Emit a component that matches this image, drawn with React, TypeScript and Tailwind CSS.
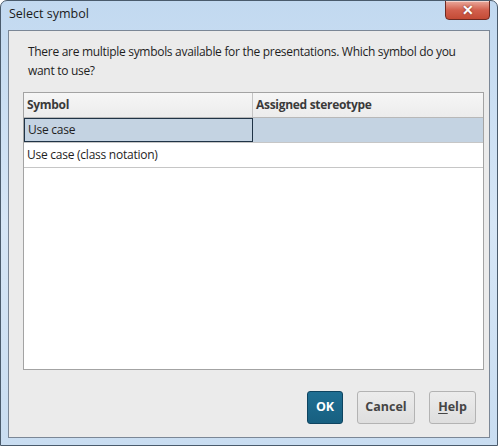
import React from "react";

// Rows shown in the symbol table
const ROWS = [
  { symbol: "Use case", stereotype: "", selected: true },
  { symbol: "Use case (class notation)", stereotype: "", selected: false },
];

const FONT = "font-['Open_Sans','Noto_Sans',sans-serif]";

export default function App() {
  return (
    <div
      className={`relative flex h-[446px] w-[498px] flex-col overflow-hidden rounded-t-[7px] border border-[#4a5b6c] bg-gradient-to-b from-[#c2d9f0] via-[#d6e6f6] to-[#c9ddf1] px-[7px] pb-[7px] text-[12px] text-[#1e1e1e] ${FONT}`}
    >
      {/* title bar */}
      <div className="flex h-[29px] shrink-0 items-center pl-[1px] pb-[2px] text-[12.5px] text-[#1b1b1b]">
        Select symbol
      </div>

      {/* close button */}
      <div className="absolute right-[7px] top-[-1px] flex h-[20px] w-[45px] items-center justify-center rounded-b-[4px] border border-[#6e2a22] bg-gradient-to-b from-[#e9a99d] via-[#d2604e] to-[#c44a35] shadow-[inset_0_1px_0_rgba(255,255,255,0.5)]">
        <span className="text-[14px] font-black leading-none text-white [text-shadow:0_0_2px_#6e2a22]">
          ✕
        </span>
      </div>

      {/* client area */}
      <div className="flex flex-1 flex-col border border-[#7b8796] bg-[#ebebeb]">
        <p className="pl-[19px] pr-[20px] pt-[11px] text-[12px] leading-[19px] tracking-[-0.3px]">
          There are multiple symbols available for the presentations. Which
          symbol do you want to use?
        </p>

        {/* table */}
        <div className="ml-[14px] mr-[5px] mt-[12px] flex h-[278px] flex-col border border-[#a3a3a3] bg-white">
          <div className="grid h-[25px] grid-cols-[229px_1fr] border-b border-[#b8b8b8] bg-gradient-to-b from-[#f6f6f6] to-[#ececec] text-[12px] font-bold tracking-[-0.3px] text-[#3a3a3a]">
            <div className="flex items-center border-r border-[#c4c4c4] pl-[3px]">
              Symbol
            </div>
            <div className="flex items-center pl-[3px]">Assigned stereotype</div>
          </div>
          {ROWS.map((row) => (
            <div
              key={row.symbol}
              className={`grid h-[25px] grid-cols-[229px_1fr] border-b border-[#c6c6c6] tracking-[-0.25px] ${
                row.selected ? "bg-[#c4d3e2]" : "bg-white"
              }`}
            >
              <div
                className={`flex items-center pl-[3px] ${
                  row.selected ? "border border-[#1f3346]" : ""
                }`}
              >
                {row.symbol}
              </div>
              <div className="flex items-center pl-[3px]">{row.stereotype}</div>
            </div>
          ))}
        </div>

        {/* buttons */}
        <div className="mt-auto flex justify-end gap-[14px] pb-[13px] pr-[13px] text-[12.5px] font-bold">
          <button className="h-[33px] w-[36px] rounded-[3px] border border-[#0e4460] bg-gradient-to-b from-[#1f6f93] to-[#175f80] text-white">
            OK
          </button>
          <button className="h-[33px] w-[58px] rounded-[3px] border border-[#b3b3b3] bg-gradient-to-b from-[#ececec] to-[#dedede] text-[#454545]">
            Cancel
          </button>
          <button className="h-[33px] w-[47px] rounded-[3px] border border-[#b3b3b3] bg-gradient-to-b from-[#ececec] to-[#dedede] text-[#454545]">
            <span className="underline decoration-1 underline-offset-2">H</span>
            elp
          </button>
        </div>
      </div>
    </div>
  );
}
